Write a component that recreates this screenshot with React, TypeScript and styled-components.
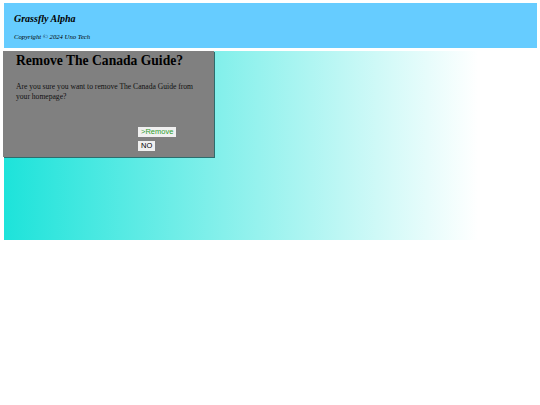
import React from 'react';
import styled, { createGlobalStyle } from 'styled-components';

const GlobalStyle = createGlobalStyle`
  html, body {
    margin: 0;
    padding: 0;
    background: #ffffff;
  }
  body {
    padding: 3px 3px 0 4px;
    font-family: "Liberation Serif", "Times New Roman", serif;
  }
`;

const Header = styled.header`
  background-color: #66ccff;
  height: 45px;
  padding: 10px 10px 0;
  box-sizing: border-box;
  display: flex;
  flex-direction: column;
  gap: 8px;

  h1 {
    margin: 0;
    font-size: 10px;
    line-height: 12px;
    font-style: italic;
    font-weight: 700;
    color: #000000;
  }

  p {
    margin: 0;
    font-size: 6.7px;
    line-height: 8px;
    font-style: italic;
    color: #000000;
  }
`;

const Stage = styled.main`
  margin-top: 3px;
  height: 189px;
  background: linear-gradient(to right, #1de3da 0%, #ffffff 89%);
`;

const Dialog = styled.div`
  margin-left: -1px;
  width: 211px;
  height: 106px;
  background-color: #808080;
  box-shadow: 1px 1px 0 #2c6d6d;
  padding: 0 8px 0 13px;
  box-sizing: border-box;
  display: flex;
  flex-direction: column;

  h2 {
    margin: 0;
    padding-top: 1px;
    font-size: 13.6px;
    font-weight: 700;
    line-height: 17px;
    white-space: nowrap;
    color: #000000;
  }

  p {
    margin: 13px 0 0;
    font-size: 7.6px;
    line-height: 9.5px;
    color: #111111;
    max-width: 186px;
  }
`;

const Actions = styled.div`
  margin-top: 26px;
  padding-left: 122px;
  display: flex;
  flex-direction: column;
  align-items: flex-start;
  gap: 4px;
`;

const ActionButton = styled.button<{ $tone?: 'green' | 'plain' }>`
  font-family: "Liberation Sans", Arial, sans-serif;
  font-size: 7.5px;
  line-height: 10px;
  padding: 0 3px;
  border: none;
  border-radius: 0;
  background-color: #f0f0f0;
  color: ${(p) => (p.$tone === 'green' ? '#2f9e2f' : '#000000')};
  cursor: pointer;
  height: 10px;
`;

export default function App() {
  return (
    <>
      <GlobalStyle />
      <Header>
        <h1>Grassfly Alpha</h1>
        <p>Copyright © 2024 Uno Tech</p>
      </Header>
      <Stage>
        <Dialog>
          <h2>Remove The Canada Guide?</h2>
          <p>Are you sure you want to remove The Canada Guide from your homepage?</p>
          <Actions>
            <ActionButton $tone="green">&gt;Remove</ActionButton>
            <ActionButton>NO</ActionButton>
          </Actions>
        </Dialog>
      </Stage>
    </>
  );
}
